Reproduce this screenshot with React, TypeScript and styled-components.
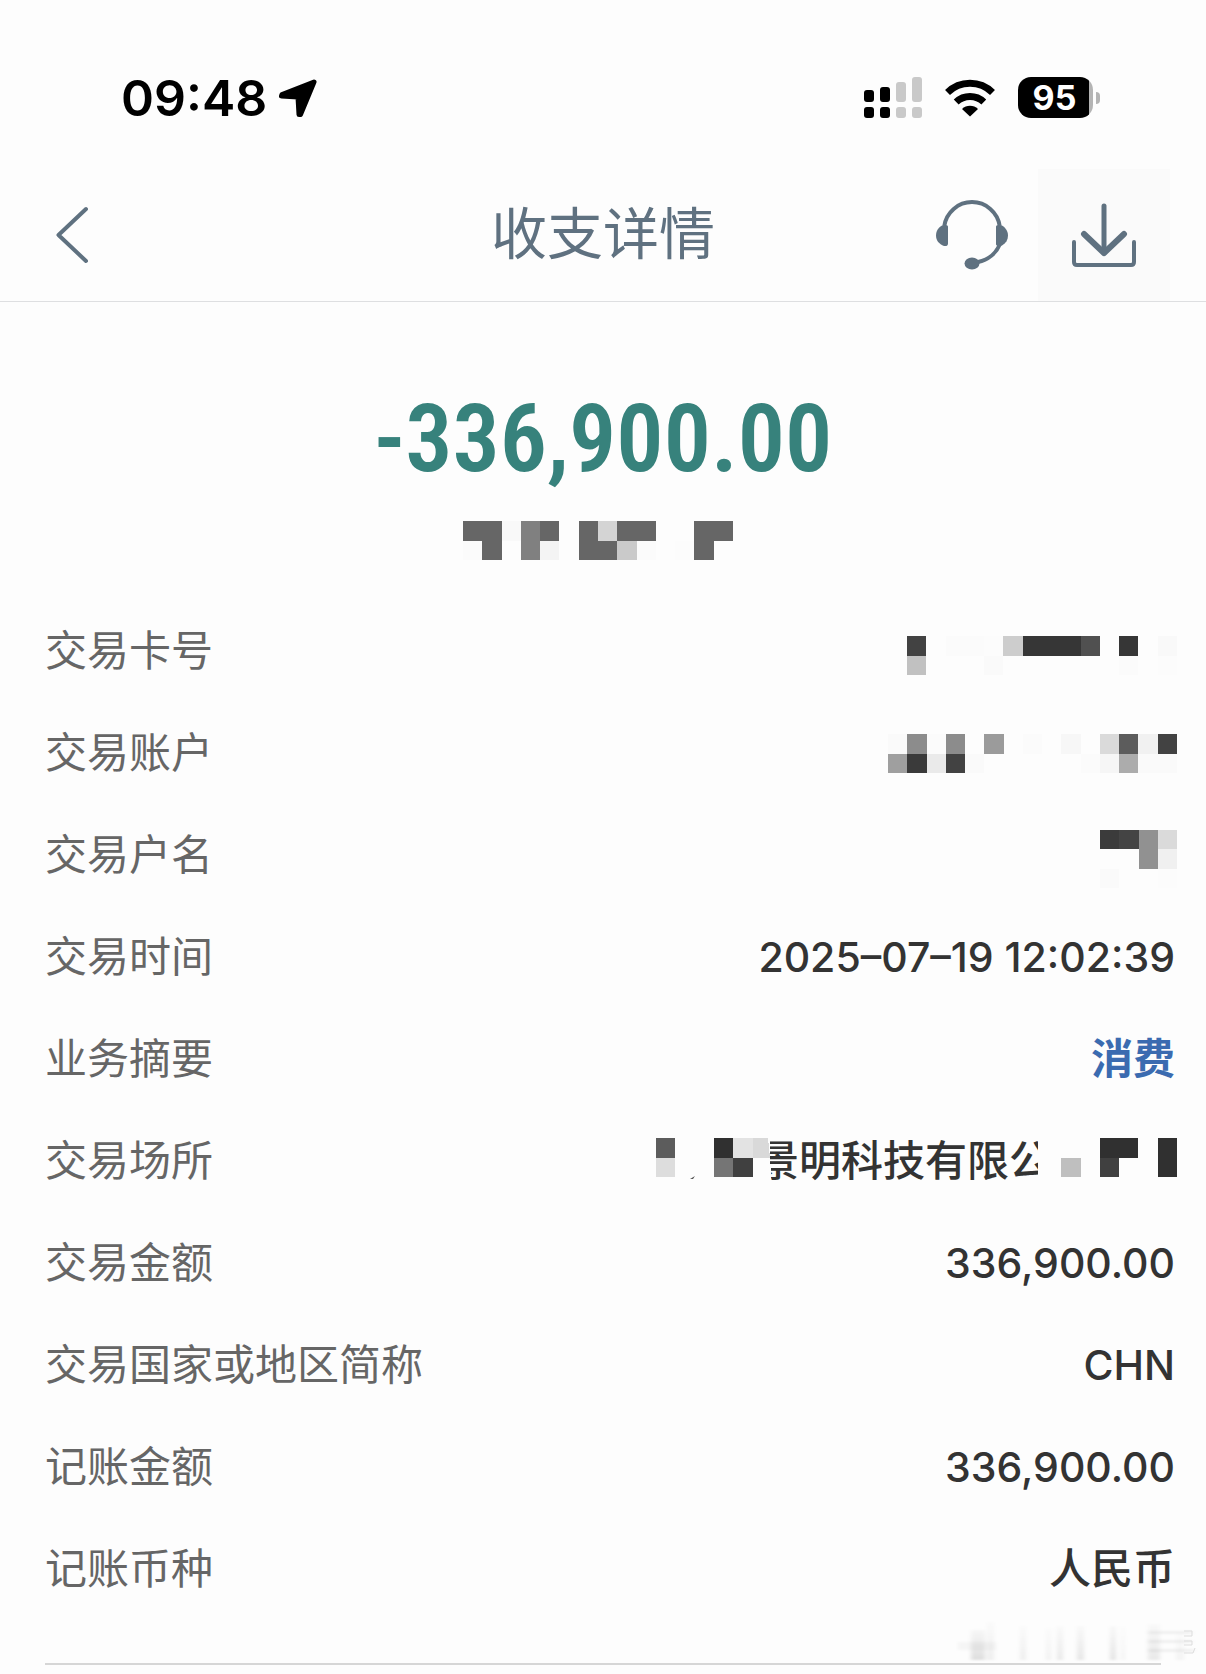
import React from "react";
import styled, { createGlobalStyle } from "styled-components";

const PAGE = "#fdfdfd";
const SLATE = "#5f7180";

const GlobalStyle = createGlobalStyle`
  * { box-sizing: border-box; }
  body {
    margin: 0;
    background: ${PAGE};
    font-family: Inter, "Noto Sans CJK SC", sans-serif;
  }
`;

const Screen = styled.div`
  min-height: 100vh;
  overflow: hidden;
  background: ${PAGE};
`;

const StatusBar = styled.div`
  display: flex;
  justify-content: space-between;
  align-items: center;
  height: 169px;
  padding: 0 106px 0 121px;
`;

const StatusGroup = styled.div<{ $gap: number }>`
  display: flex;
  align-items: center;
  gap: ${(p) => p.$gap}px;
  padding-top: 26px;
`;

const Clock = styled.time`
  font-size: 50px;
  line-height: 60px;
  font-weight: 600;
  color: #000;
`;

const Battery = styled.div`
  display: flex;
  align-items: center;
  gap: 3px;
`;

const BatteryBody = styled.div`
  width: 75px;
  height: 41px;
  padding-right: 2px;
  border-radius: 13px;
  background: linear-gradient(to right, #000 71px, #b4b4b4 71px);
  color: #fff;
  font-size: 34px;
  line-height: 42px;
  font-weight: 700;
  text-align: center;
`;

const BatteryCap = styled.div`
  width: 4px;
  height: 12px;
  border-radius: 0 4px 4px 0;
  background: #b4b4b4;
`;

const NavBar = styled.header`
  display: grid;
  grid-template-columns: 1fr auto 1fr;
  align-items: center;
  border-bottom: 1px solid #dedfe1;
`;

const Title = styled.h1`
  margin: 0;
  padding-bottom: 2px;
  font-size: 56px;
  line-height: 80px;
  font-weight: 400;
  color: ${SLATE};
`;

const NavActions = styled.div`
  display: flex;
  justify-content: flex-end;
  padding-right: 36px;
`;

const IconButton = styled.button<{ $shaded?: boolean }>`
  display: flex;
  align-items: center;
  justify-content: center;
  width: 132px;
  height: 132px;
  padding: 0;
  border: 0;
  background: ${(p) => (p.$shaded ? "#fafafa" : "transparent")};
  color: ${SLATE};
`;

const BackButton = styled(IconButton)`
  width: 60px;
  margin-left: 42px;
`;

const Summary = styled.section`
  display: flex;
  flex-direction: column;
  align-items: center;
  gap: 32px;
  padding: 87px 0 40px;
`;

const Amount = styled.p`
  margin: 0;
  font-family: "Roboto Condensed", Roboto, sans-serif;
  font-size: 94px;
  line-height: 100px;
  font-weight: 600;
  color: #37827c;
`;

const Payee = styled.div`
  padding-right: 10px;

  svg {
    display: block;
  }
`;

const Details = styled.dl`
  margin: 0;
  padding: 0 29px 0 45px;
`;

const Row = styled.div`
  display: flex;
  justify-content: space-between;
  align-items: center;
  height: 102px;
  font-size: 42px;
  line-height: 60px;
`;

const Label = styled.dt`
  color: #666;
`;

const Value = styled.dd`
  display: flex;
  margin: 0;
  color: #333;
  font-weight: 500;
`;

const Figure = styled.span`
  padding-right: 2px;
  font-size: 41px;
`;

const Word = styled.span`
  padding-right: 2px;
`;

const CategoryLink = styled.a`
  padding-right: 2px;
  color: #3b6bb0;
  font-weight: 700;
  text-decoration: none;
`;

const Censored = styled.span`
  display: flex;
  padding-top: 8px;
`;

const Place = styled.span`
  display: flex;
  align-items: center;

  svg {
    z-index: 1;
  }
`;

const PlaceName = styled.span`
  margin: 0 -13px 0 -15px;
  white-space: nowrap;
`;

const Watermark = styled.div`
  display: flex;
  justify-content: flex-end;
  padding-right: 8px;
`;

const Divider = styled.hr`
  height: 2px;
  margin: 0 45px;
  border: 0;
  background: #d6d6d6;
`;

type Shade = string | 0;

/* Censored text: a grid of grey cells, 0 leaves a cell clear. */
function Mosaic({ rows, width }: { rows: Shade[][]; width: number }) {
  const cols = rows[0].length;
  return (
    <svg
      width={width}
      height={Math.round((width / cols) * rows.length)}
      viewBox={`0 0 ${cols} ${rows.length}`}
      preserveAspectRatio="none"
      shapeRendering="crispEdges"
      aria-hidden="true"
    >
      {rows.map((row, y) =>
        row.map((shade, x) =>
          shade ? <rect key={`${x}-${y}`} x={x} y={y} width="1" height="1" fill={`#${shade}${shade}${shade}`} /> : null
        )
      )}
    </svg>
  );
}

const payeeMosaic: Shade[][] = [
  ["66", "66", "f9", "80", "66", 0, "66", "d4", "66", "66", 0, 0, "66", "66"],
  ["fb", "66", 0, "80", "f4", 0, "66", "66", "ca", "fb", 0, "fc", "66", 0],
];
const cardMosaic: Shade[][] = [
  ["42", 0, "fb", "fb", "fc", "cd", "36", "36", "36", "50", 0, "36", 0, "f9"],
  ["c1", 0, 0, 0, "fa", 0, 0, 0, 0, 0, 0, "fb", 0, "fc"],
];
const accountMosaic: Shade[][] = [
  ["fa", "8c", "fb", "8c", 0, "9b", 0, "fb", 0, "f7", 0, "da", "5c", "f1", "42"],
  ["9f", "3a", "ea", "42", "fa", 0, 0, 0, 0, 0, "fb", "f6", "ac", "fa", "fa"],
];
const holderMosaic: Shade[][] = [
  ["3b", "44", "91", "da"],
  [0, 0, "91", "f0"],
  ["fa", 0, 0, "fc"],
];

function PlaceStart() {
  return (
    <svg width="116" height="60" viewBox="0 0 116 60" shapeRendering="crispEdges" aria-hidden="true">
      <path fill={PAGE} d="M0 0H114V27L116 60H0z" />
      <path fill="#5c5c5c" d="M0 7h19v20H0z" />
      <path fill="#ddd" d="M0 27h19v19H0z" />
      <path fill="#303030" d="M58 7h19v20H58z" />
      <path fill="#e3e3e3" d="M77 7h20v20H77z" />
      <path fill="#d9d9d9" d="M97 7h15l2 20H97z" />
      <path fill="#757575" d="M58 27h19v19H58z" />
      <path fill="#404040" d="M77 27h20v19H77z" />
      <path fill="#555" shapeRendering="auto" d="M34 48l5-3-2 3z" />
    </svg>
  );
}

function PlaceEnd() {
  return (
    <svg width="139" height="60" viewBox="0 0 139 60" shapeRendering="crispEdges" aria-hidden="true">
      <path fill={PAGE} d="M0 0H139V60H0z" />
      <path fill="#bfbfbf" d="M23 27h20v19H23z" />
      <path fill="#303030" d="M62 7h38v20H62zM120 7h19v39h-19z" />
      <path fill="#404040" d="M62 27h19v19H62z" />
    </svg>
  );
}

function LocationIcon() {
  return (
    <svg width="40" height="40" viewBox="0 0 40 40" aria-hidden="true">
      <path
        d="M36 4 4 16.500 3.500 18 20 19l1 17.500 1.500 0z"
        fill="#000"
        stroke="#000"
        strokeWidth="5"
        strokeLinejoin="round"
      />
    </svg>
  );
}

function SignalIcon() {
  const tops = [13, 10, 5, 0];
  return (
    <svg width="58" height="41" viewBox="0 0 58 41" aria-hidden="true">
      {tops.map((top, i) => (
        <g key={top} fill={i < 2 ? "#000" : "#c9c9c9"}>
          <rect x={i * 16} y={top} width="10" height={25 - top} rx="3" />
          <rect x={i * 16} y="30" width="10" height="11" rx="3" />
        </g>
      ))}
    </svg>
  );
}

function WifiIcon() {
  return (
    <svg width="50" height="38" viewBox="0 0 50 38" aria-hidden="true">
      <g fill="none" stroke="#000" strokeWidth="7">
        <path d="M2.500 13.500a32 32 0 0 1 45 0" />
        <path d="M11.200 23a20 20 0 0 1 27.600 0" />
      </g>
      <path d="M25 37.500 17 30a11.500 11.500 0 0 1 16 0z" fill="#000" />
    </svg>
  );
}

function BackIcon() {
  return (
    <svg width="34" height="58" viewBox="0 0 34 58" fill="none" aria-hidden="true">
      <path d="M31 3 3.500 29 31 55" stroke="currentColor" strokeWidth="4" strokeLinecap="round" strokeLinejoin="round" />
    </svg>
  );
}

function HeadsetIcon() {
  return (
    <svg width="72" height="74" viewBox="0 0 72 74" aria-hidden="true">
      <path d="M8.300 28a28 28 0 0 1 55.400 0M64 46A30 30 0 0 1 42 64" fill="none" stroke="currentColor" strokeWidth="4" />
      <path d="M12 28.500v17q0 3-4 2.500C3 46 0 42.500 0 37.500S3 29 6 27.500q6-1.500 6 1z" fill="currentColor" />
      <path d="M60 28.500v18q1 3 6 1c4-2.500 6-5.500 6-10S69 29 66 27.500q-6-1.500-6 1z" fill="currentColor" />
      <ellipse cx="36" cy="65.500" rx="7.500" ry="6" fill="currentColor" />
    </svg>
  );
}

function DownloadIcon() {
  return (
    <svg width="66" height="66" viewBox="0 0 66 66" fill="none" aria-hidden="true">
      <g stroke="currentColor" strokeLinecap="round">
        <path d="M3 40v20q0 3 3 3h54q3 0 3-3V40" strokeWidth="4" />
        <path d="M33 4v47" strokeWidth="5" />
        <path d="M13 32 33 51l20-19" strokeWidth="6" strokeLinejoin="round" />
      </g>
    </svg>
  );
}

function WatermarkSmudge() {
  const streaks = [
    { x: 15, w: 14, top: 8, o: 0.12 },
    { x: 31, w: 7, top: 0, o: 0.06 },
    { x: 64, w: 6, top: 4, o: 0.06 },
    { x: 90, w: 5, top: 6, o: 0.05 },
    { x: 101, w: 6, top: 4, o: 0.08 },
    { x: 121, w: 7, top: 4, o: 0.09 },
    { x: 154, w: 6, top: 4, o: 0.1 },
    { x: 165, w: 4, top: 4, o: 0.04 },
    { x: 192, w: 12, top: 2, o: 0.08 },
    { x: 220, w: 8, top: 10, o: 0.04 },
  ];
  return (
    <svg width="242" height="43" viewBox="0 0 242 43" aria-hidden="true">
      <defs>
        <linearGradient id="streak" x1="0" y1="0" x2="0" y2="1">
          <stop offset="0" stopColor="#000" stopOpacity="0.2" />
          <stop offset="1" stopColor="#000" />
        </linearGradient>
        <filter id="soft" x="-50%" y="-10%" width="200%" height="120%">
          <feGaussianBlur stdDeviation="2 1" />
        </filter>
      </defs>
      <g filter="url(#soft)">
        {streaks.map((s) => (
          <rect key={s.x} x={s.x} y={s.top + 2} width={s.w} height={38 - s.top} fill="url(#streak)" opacity={s.o} />
        ))}
        <path d="M2 22h38v8H2z" fill="#000" opacity="0.03" />
        <path d="M192 11h44v3h-44zM192 20h44v3h-44zM192 29h46v3h-46z" fill="#000" opacity="0.05" />
      </g>
      <path d="M228 11h8v5h-8M228 21h8v4h-8M228 33h9l2-5" fill="none" stroke="#ddd" strokeWidth="1" />
    </svg>
  );
}

const details: { label: string; value: React.ReactNode }[] = [
  {
    label: "交易卡号",
    value: (
      <Censored>
        <Mosaic rows={cardMosaic} width={270} />
      </Censored>
    ),
  },
  { label: "交易账户", value: <Mosaic rows={accountMosaic} width={289} /> },
  {
    label: "交易户名",
    value: (
      <Censored>
        <Mosaic rows={holderMosaic} width={77} />
      </Censored>
    ),
  },
  { label: "交易时间", value: <Figure>2025–07–19 12:02:39</Figure> },
  { label: "业务摘要", value: <CategoryLink href="#category">消费</CategoryLink> },
  {
    label: "交易场所",
    value: (
      <Place>
        <PlaceStart />
        <PlaceName>景明科技有限公</PlaceName>
        <PlaceEnd />
      </Place>
    ),
  },
  { label: "交易金额", value: <Figure>336,900.00</Figure> },
  { label: "交易国家或地区简称", value: <Figure>CHN</Figure> },
  { label: "记账金额", value: <Figure>336,900.00</Figure> },
  { label: "记账币种", value: <Word>人民币</Word> },
];

export default function App() {
  return (
    <Screen>
      <GlobalStyle />
      <StatusBar>
        <StatusGroup $gap={11}>
          <Clock>09:48</Clock>
          <LocationIcon />
        </StatusGroup>
        <StatusGroup $gap={23}>
          <SignalIcon />
          <WifiIcon />
          <Battery>
            <BatteryBody>95</BatteryBody>
            <BatteryCap />
          </Battery>
        </StatusGroup>
      </StatusBar>
      <NavBar>
        <BackButton aria-label="返回">
          <BackIcon />
        </BackButton>
        <Title>收支详情</Title>
        <NavActions>
          <IconButton aria-label="客服">
            <HeadsetIcon />
          </IconButton>
          <IconButton aria-label="下载" $shaded>
            <DownloadIcon />
          </IconButton>
        </NavActions>
      </NavBar>
      <main>
        <Summary>
          <Amount>-336,900.00</Amount>
          <Payee>
            <Mosaic rows={payeeMosaic} width={270} />
          </Payee>
        </Summary>
        <Details>
          {details.map((d) => (
            <Row key={d.label}>
              <Label>{d.label}</Label>
              <Value>{d.value}</Value>
            </Row>
          ))}
        </Details>
        <Watermark>
          <WatermarkSmudge />
        </Watermark>
        <Divider />
      </main>
    </Screen>
  );
}
